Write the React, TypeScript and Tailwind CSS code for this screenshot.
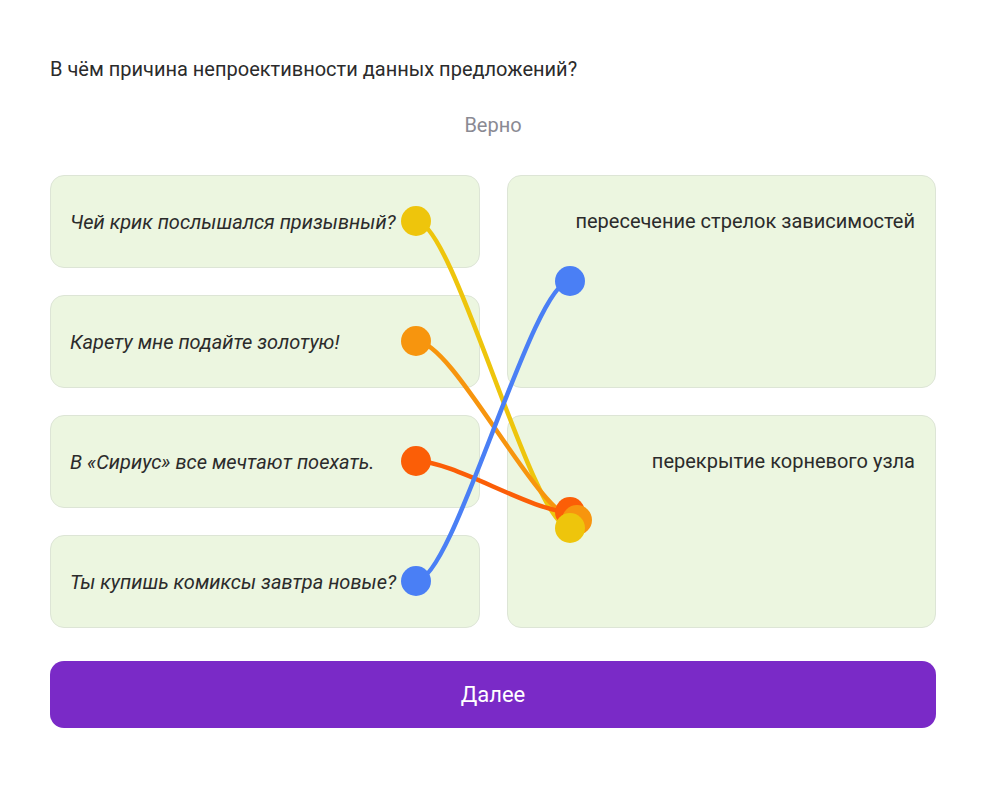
import React from 'react';

const sentences = [
  'Чей крик послышался призывный?',
  'Карету мне подайте золотую!',
  'В «Сириус» все мечтают поехать.',
  'Ты купишь комиксы завтра новые?',
];

const answers = ['пересечение стрелок зависимостей', 'перекрытие корневого узла'];

// coordinates inside the board (board starts at 50,175)
const links = [
  { color: '#EEC50C', from: [366, 46], to: [520, 353] },
  { color: '#F7950E', from: [366, 166], to: [527, 345] },
  { color: '#FB5E07', from: [366, 286], to: [520, 337] },
  { color: '#4A7FF5', from: [366, 406], to: [520, 106] },
];

const curve = (a: number[], b: number[]) => {
  const dx = 38;
  return `M${a[0]} ${a[1]} C${a[0] + dx} ${a[1]} ${b[0] - dx} ${b[1]} ${b[0]} ${b[1]}`;
};

const App = () => {
  return (
    <div
      className="min-h-screen bg-white px-[50px] pt-[55px] text-[#2b2b2b]"
      style={{ fontFamily: 'Roboto, "Noto Sans", sans-serif' }}
    >
      <div className="w-[886px]">
        <h1 className="text-[20px] leading-[28px]">
          В чём причина непроективности данных предложений?
        </h1>

        <p className="mt-[28px] text-center text-[20px] leading-[28px] text-[#8a8a93]">
          Верно
        </p>

        <div className="relative mt-[36px]">
          <div className="grid grid-cols-2 gap-x-[27px]">
            <div className="flex flex-col gap-[27px]">
              {sentences.map((s) => (
                <div
                  key={s}
                  className="flex h-[93px] items-center rounded-[14px] border border-[#dde5d6] bg-[#ecf6e0] px-[19px] text-[20px] italic"
                >
                  {s}
                </div>
              ))}
            </div>
            <div className="flex flex-col gap-[27px]">
              {answers.map((a) => (
                <div
                  key={a}
                  className="h-[213px] rounded-[14px] border border-[#dde5d6] bg-[#ecf6e0] px-[20px] pt-[31px] text-right text-[20px] leading-[28px]"
                >
                  {a}
                </div>
              ))}
            </div>
          </div>

          <svg
            className="pointer-events-none absolute inset-0 overflow-visible"
            width="886"
            height="453"
          >
            {links.map((l) => (
              <path
                key={l.color}
                d={curve(l.from, l.to)}
                stroke={l.color}
                strokeWidth="4.5"
                fill="none"
                strokeLinecap="round"
              />
            ))}
            {links.map((l) => (
              <circle key={l.color + 'a'} cx={l.from[0]} cy={l.from[1]} r="15" fill={l.color} />
            ))}
            <circle cx="520" cy="106" r="15" fill="#4A7FF5" />
            <circle cx="520" cy="337" r="15" fill="#FB5E07" />
            <circle cx="527" cy="345" r="15" fill="#F7950E" />
            <circle cx="520" cy="353" r="15" fill="#EEC50C" />
          </svg>
        </div>

        <button className="mt-[33px] flex h-[67px] w-full items-center justify-center rounded-[14px] bg-[#7a2ac7] text-[22px] text-white">
          Далее
        </button>
      </div>
    </div>
  );
};

export default App;
